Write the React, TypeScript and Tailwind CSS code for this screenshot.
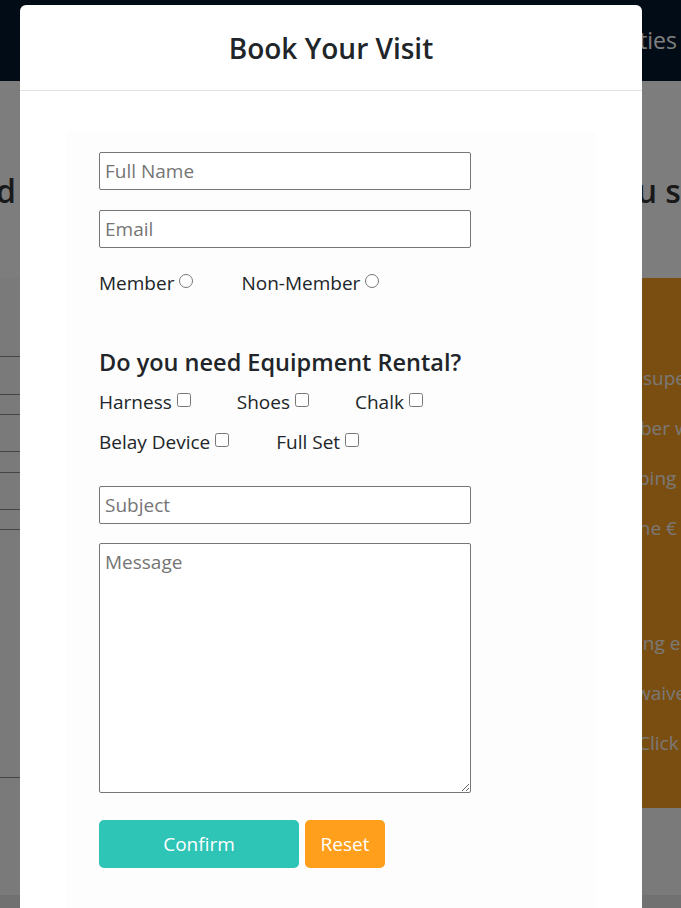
import { useState } from 'react'

const font = { fontFamily: '"Open Sans", "Noto Sans", sans-serif' }

const Field = ({ placeholder }: { placeholder: string }) => (
  <input
    type="text"
    placeholder={placeholder}
    className="block w-[372px] h-[38px] border border-[#767676] rounded-[2px] bg-white px-[5px] text-[19px] text-[#212529] placeholder:text-[#757575] outline-none"
  />
)

const Check = ({ label, type = 'checkbox', name }: { label: string; type?: string; name?: string }) => (
  <label className="flex items-center whitespace-nowrap">
    <span>{label}</span>
    <input type={type} name={name} className="ml-[5px] mt-[-4px] h-[14px] w-[14px]" />
  </label>
)

const BookingModal = () => {
  const [reset, setReset] = useState(0)

  return (
    <div className="absolute left-[20px] top-[5px] w-[622px] h-[960px] rounded-[6px] bg-white" style={font}>
      <div className="flex h-[86px] items-center justify-center border-b border-[#dee2e6]">
        <h2 className="text-[28px] font-semibold text-[#212529]">Book Your Visit</h2>
      </div>
      <div className="px-[46px] pt-[41px]">
        <form key={reset} className="h-[900px] bg-[#fcfdfc] pl-[33px] pt-[20px] text-[19px] text-[#212529]">
          <Field placeholder="Full Name" />
          <div className="mt-[20px]">
            <Field placeholder="Email" />
          </div>

          <div className="mt-[21px] flex h-[28px] items-center gap-[48px]">
            <Check label="Member" type="radio" name="member" />
            <Check label="Non-Member" type="radio" name="member" />
          </div>

          <h4 className="mt-[51px] text-[23.5px] leading-[29px] font-semibold">Do you need Equipment Rental?</h4>
          <div className="mt-[11px] flex h-[28px] items-center gap-[46px]">
            <Check label="Harness" />
            <Check label="Shoes" />
            <Check label="Chalk" />
          </div>
          <div className="mt-[12px] flex h-[28px] items-center gap-[47px]">
            <Check label="Belay Device" />
            <Check label="Full Set" />
          </div>

          <div className="mt-[30px]">
            <Field placeholder="Subject" />
          </div>
          <textarea
            placeholder="Message"
            className="mt-[19px] block h-[250px] w-[372px] border border-[#767676] rounded-[2px] bg-white px-[5px] py-[5px] text-[19px] leading-[26px] placeholder:text-[#757575] outline-none"
          />

          <div className="mt-[27px] flex gap-[6px]">
            <button type="button" className="h-[48px] w-[200px] rounded-[5px] bg-[#2ec4b6] text-[19px] text-white">
              Confirm
            </button>
            <button
              type="button"
              onClick={() => setReset(reset + 1)}
              className="h-[48px] w-[80px] rounded-[5px] bg-[#ff9f1c] text-[19px] text-white"
            >
              Reset
            </button>
          </div>
        </form>
      </div>
    </div>
  )
}

// fragments of the info box that peek out from behind the modal
const lines: [string, number, number][] = [
  ['supervised', 43, 50],
  ['ber with', 40, 50],
  ['ping', 38, 50],
  ['the €', 32, 50],
  ['', 0, 65],
  ['ing equipment', 38, 50],
  ['waiver', 36, 50],
  ['Click', 38, 50],
]

export default function App() {
  return (
    <div className="relative h-[908px] w-[681px] overflow-hidden bg-[#f5f5f5]" style={font}>
      <nav className="flex h-[81px] items-center justify-end bg-[#04182c] pr-[4px] text-[23px] text-white">
        <span>Activities</span>
      </nav>

      <div className="flex h-[197px] items-center justify-between bg-[#fbfbfb] pt-[22px]">
        <h3 className="w-[16px] overflow-hidden flex justify-end whitespace-nowrap text-[32px] font-semibold text-[#333]">
          Find
        </h3>
        <h3 className="w-[81px] overflow-hidden whitespace-nowrap text-[32px] font-semibold text-[#333]">
          you see
        </h3>
      </div>

      <div className="flex">
        <div className="w-[600px] shrink-0 pt-[78px]">
          <div className="h-[38px] border-t border-[#8a8a8a]" />
          <div className="h-[20px] border-t border-[#8a8a8a]" />
          <div className="h-[37px] border-t border-[#8a8a8a]" />
          <div className="h-[21px] border-t border-[#8a8a8a]" />
          <div className="h-[37px] border-t border-[#8a8a8a]" />
          <div className="h-[20px] border-t border-[#8a8a8a]" />
          <div className="h-[248px] border-t border-[#8a8a8a]" />
          <div className="border-t border-[#8a8a8a]" />
        </div>
        <div className="h-[530px] min-w-0 flex-1 overflow-hidden bg-[#f49c20] pt-[87px] text-[19px] leading-[26px] text-[#f4f0ea]">
          {lines.map(([t, pl, h], i) => (
            <div key={i} className="whitespace-nowrap" style={{ paddingLeft: pl, height: h }}>
              {t}
            </div>
          ))}
        </div>
      </div>
      <div className="h-[87px]" />
      <div className="h-[13px] bg-[#e2e2e2]" />

      <div className="absolute inset-0 bg-black/50" />
      <BookingModal />
    </div>
  )
}
